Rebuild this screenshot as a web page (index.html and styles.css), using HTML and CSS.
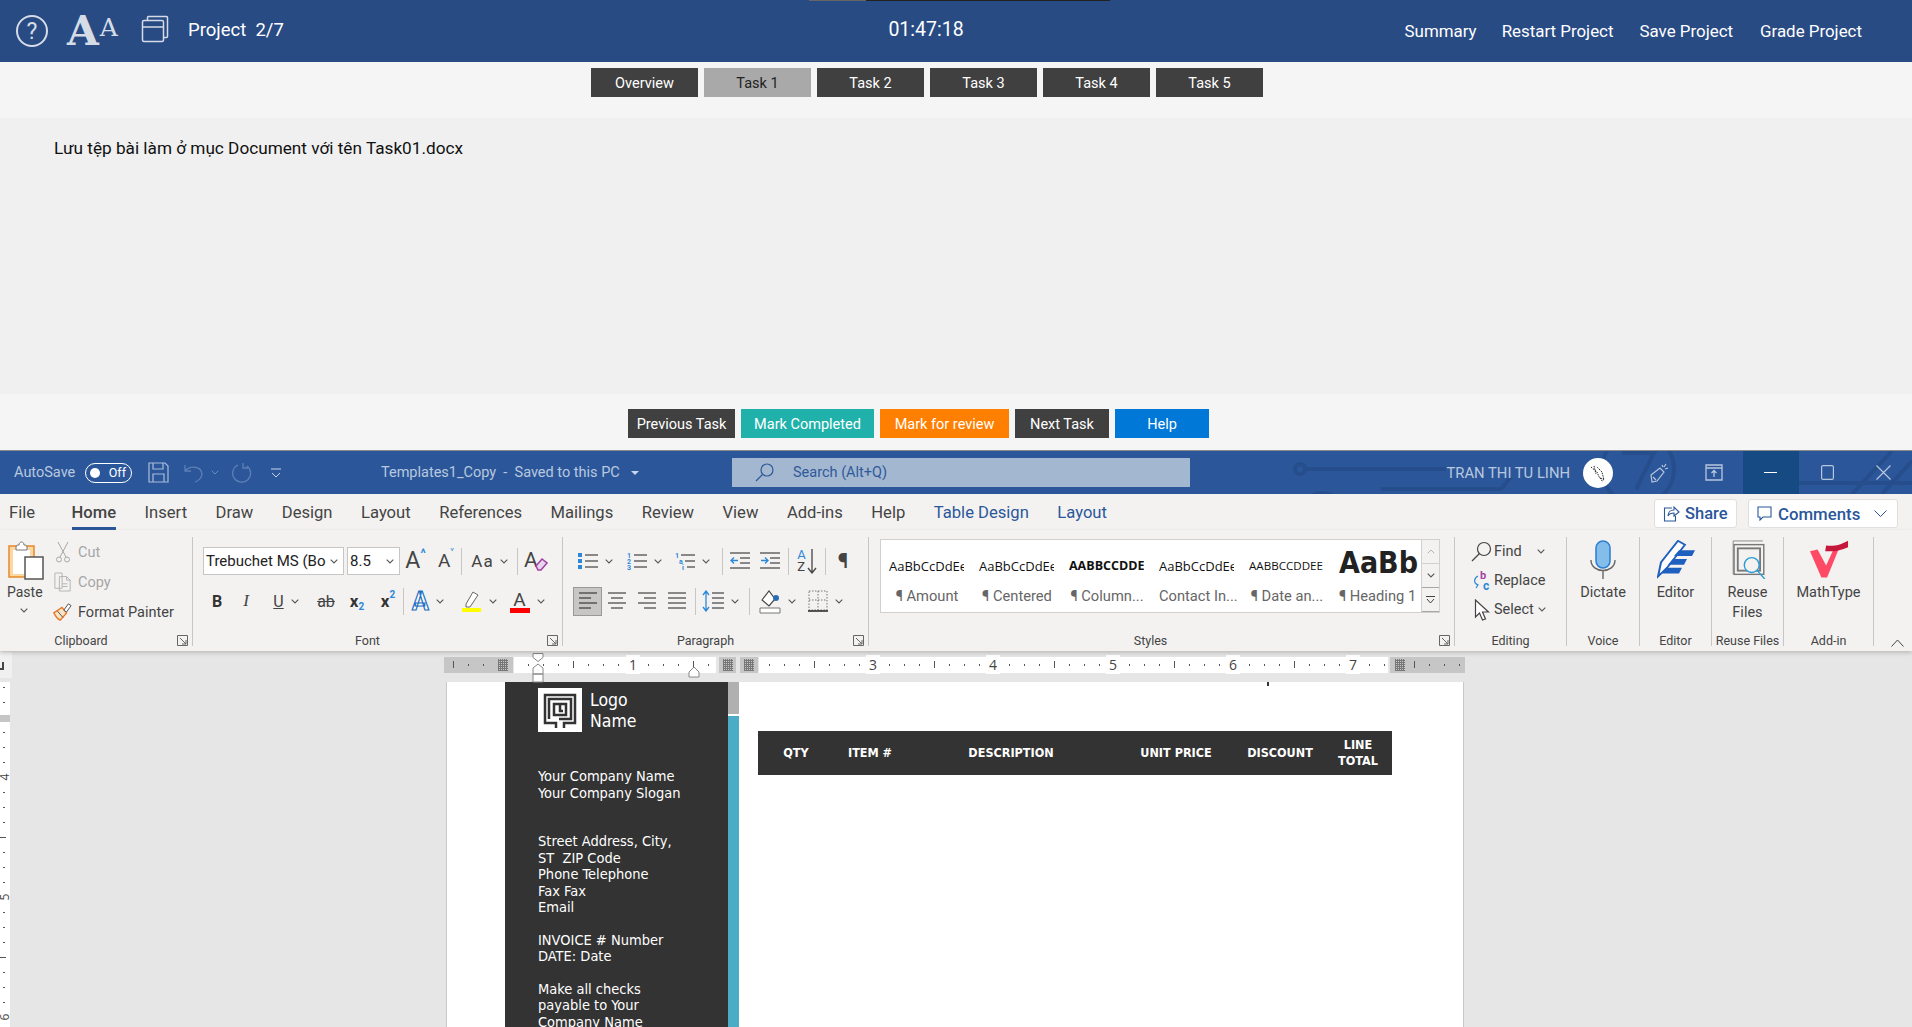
FILE: index.html
```html
<!DOCTYPE html>
<html lang="en">
  <head>
    <meta charset="UTF-8" />
    <meta name="viewport" content="width=device-width, initial-scale=1.0" />
    <title>Project 2/7</title>
    <link rel="stylesheet" href="styles.css">
  </head>
  <body>
    <svg class="sprite" width="0" height="0">
      <symbol id="chev" viewBox="0 0 8 5"><path d="M.7.7 4 4 7.3.7" fill="none" stroke="#555" stroke-width="1.1" /></symbol>
      <symbol id="launch" viewBox="0 0 11 11"><path d="M.5 10.500V.5h10v10zM3 3l6 6M5 9h4V5" fill="none" stroke="#666" /></symbol>
    </svg>

    <div class="progress"><span class="progress-done"></span><span class="progress-rest"></span></div>

    <header class="topbar">
      <div class="topbar-left">
        <svg class="icon-help" width="34" height="34" viewBox="0 0 34 34"><circle cx="17" cy="17" r="15" fill="none" stroke="#d5dce6" stroke-width="2" /><text x="17" y="25" text-anchor="middle" class="help-mark">?</text></svg>
        <span class="aa"><span class="aa-big">A</span><span class="aa-small">A</span></span>
        <svg class="icon-window" width="28" height="28" viewBox="0 0 28 28"><path d="M6.500 5.500V2.500a1 1 0 0 1 1-1h18a1 1 0 0 1 1 1v19a1 1 0 0 1-1 1h-3" fill="none" stroke="#d5dce6" stroke-width="1.500" /><rect x="1.500" y="5.500" width="21" height="21" rx="1.500" fill="none" stroke="#d5dce6" stroke-width="1.500" /><path d="M1.500 12h21" stroke="#d5dce6" stroke-width="1.500" /></svg>
        <span class="project">Project&nbsp; 2/7</span>
      </div>
      <div class="timer">01:47:18</div>
      <nav class="topbar-links">
        <a class="link-summary">Summary</a>
        <a class="link-restart">Restart Project</a>
        <a class="link-save">Save Project</a>
        <a class="link-grade">Grade Project</a>
      </nav>
    </header>

    <div class="task-tabs">
      <button class="btn">Overview</button>
      <button class="btn btn-active">Task 1</button>
      <button class="btn">Task 2</button>
      <button class="btn">Task 3</button>
      <button class="btn">Task 4</button>
      <button class="btn">Task 5</button>
    </div>

    <main class="instructions">Lưu tệp bài làm ở mục Document với tên Task01.docx</main>

    <div class="actions">
      <button class="btn btn-prev">Previous Task</button>
      <button class="btn btn-teal">Mark Completed</button>
      <button class="btn btn-orange">Mark for review</button>
      <button class="btn btn-next">Next Task</button>
      <button class="btn btn-help">Help</button>
    </div>

    <section class="word">
      <div class="titlebar">
        <svg class="circuit" width="640" height="43" viewBox="0 0 640 43">
          <g fill="none" stroke="#264e8d" stroke-width="4">
            <circle cx="28" cy="18" r="5" />
            <path d="M33 18H174" />
            <circle cx="50" cy="64" r="22" />
            <circle cx="366" cy="18" r="36" />
            <path d="M350 2h32l-18 36" />
            <path d="M109 38h120l10-12" />
            <path d="M525 32h115M580 43l40-43M610 43l30-33" />
          </g>
        </svg>
        <div class="qat">
          <span class="autosave">AutoSave</span>
          <span class="toggle"><span class="toggle-dot"></span>Off</span>
          <svg class="qat-save" width="21" height="21" viewBox="0 0 21 21" fill="none" stroke="#a9bcd8" stroke-width="1.200"><path d="M1 1h16l3 3v16H1z" /><path d="M5 1v6h10V1M5 20v-8h11v8" /></svg>
          <svg class="qat-undo" width="20" height="21" viewBox="0 0 20 21" fill="none" stroke="#5d7fb5" stroke-width="1.300"><path d="M1 3v6h6M1 9c4-5 16-6 17 3 0 4-4 7-7 8" /></svg>
          <svg class="qat-chev" width="8" height="5" viewBox="0 0 8 5" fill="none" stroke="#6f8dbd"><path d="M.7.7 4 4 7.3.7" /></svg>
          <svg class="qat-redo" width="21" height="21" viewBox="0 0 21 21" fill="none" stroke="#5d7fb5" stroke-width="1.300"><path d="M12 1v5h5M7 3a9 9 0 1 0 9 1" /></svg>
          <svg class="qat-more" width="12" height="12" viewBox="0 0 12 12" fill="none" stroke="#c7d3e6"><path d="M1 2h10M2 6l4 4 4-4" /></svg>
        </div>
        <div class="doc-title">Templates1_Copy &nbsp;-&nbsp; Saved to this PC <span class="caret"></span></div>
        <div class="search">
          <svg width="19" height="19" viewBox="0 0 19 19" fill="none" stroke="#2f5a99" stroke-width="1.200"><circle cx="12" cy="7" r="6" /><path d="M7.500 11.500 1 18" /></svg>
          <span>Search (Alt+Q)</span>
        </div>
        <div class="win">
          <span class="user">TRAN THI TU LINH</span>
          <svg class="avatar" width="30" height="30" viewBox="0 0 30 30"><circle cx="15" cy="15" r="15" fill="#fff" /><path d="M8 9l6 5 2 5 5 3-2-8-5-5M11 8l2 8M17 20l3 4" fill="none" stroke="#222" stroke-dasharray="1.500 1" /></svg>
          <svg class="feather" width="22" height="22" viewBox="0 0 22 22" fill="none" stroke="#b7c6de" stroke-width="1.200"><path d="M3 13 12 6l4 4-7 9-5 1zM5 15l3 3M14 3l1 2M18 2l-2 3M20 6l-3 1" /></svg>
          <span class="winbtn"><svg width="18" height="18" viewBox="0 0 18 18" fill="none" stroke="#b7c6de" stroke-width="1.300"><path d="M1 1h16v15H1zM1 4h16M9 13V7M6.500 9 9 6.500 11.500 9" /></svg></span>
          <span class="winbtn winbtn-min"><span class="min-line"></span></span>
          <span class="winbtn"><svg width="13" height="15" viewBox="0 0 13 15" fill="none" stroke="#b7c6de" stroke-width="1.200"><rect x=".6" y=".6" width="11.800" height="13.800" rx="1.500" /></svg></span>
          <span class="winbtn"><svg width="15" height="15" viewBox="0 0 15 15" stroke="#b7c6de" stroke-width="1.200"><path d="M.5.5l14 14M14.500.5l-14 14" /></svg></span>
        </div>
      </div>

      <div class="ribbon-tabs">
        <a>File</a>
        <a class="tab-current">Home</a>
        <a>Insert</a>
        <a>Draw</a>
        <a>Design</a>
        <a>Layout</a>
        <a>References</a>
        <a>Mailings</a>
        <a>Review</a>
        <a>View</a>
        <a>Add-ins</a>
        <a>Help</a>
        <a class="tab-context">Table Design</a>
        <a class="tab-context">Layout</a>
        <div class="ribbon-share">
          <button class="share"><svg width="17" height="17" viewBox="0 0 17 17" fill="none" stroke="#2b579a" stroke-width="1.100"><path d="M9 3H1.500v13h11v-5M5 11c0-4 3-6 6-6V2l5 5-5 4V8c-3 0-5 1-6 3z" /></svg>Share</button>
          <button class="share comments"><svg width="15" height="15" viewBox="0 0 15 15" fill="none" stroke="#2b579a" stroke-width="1.100"><path d="M1 1h13v10H6l-3 3v-3H1z" /></svg>Comments<svg class="comments-chev" width="13" height="7" viewBox="0 0 13 7" fill="none" stroke="#2b579a"><path d="M.5.5l6 6 6-6" /></svg></button>
        </div>
      </div>

      <div class="ribbon">
        <div class="group group-clipboard launch">
          <div class="group-body clip">
            <div class="paste">
              <svg width="36" height="40" viewBox="0 0 36 40"><rect x="1" y="6" width="25" height="31" fill="#fcd9a4" stroke="#e8892b" stroke-width="1.500" /><rect x="5" y="10" width="17" height="24" fill="#fff" /><path d="M8 7c0-2 2-2 3-2 0-4 5-4 5 0 1 0 3 0 3 2v3H8z" fill="#fff" stroke="#777" /><rect x="17" y="17" width="18" height="22" fill="#fff" stroke="#555" stroke-width="1.500" /></svg>
              <span class="paste-label">Paste</span>
              <svg class="paste-chev" width="8" height="5"><use href="#chev" /></svg>
            </div>
            <div class="clip-list">
              <div class="clip-row is-off"><svg width="16" height="22" viewBox="0 0 16 22" fill="none" stroke="#a8a8a8"><path d="M3 1l8 15M13 1 5 16" /><circle cx="4" cy="18.500" r="2.500" /><circle cx="12" cy="18.500" r="2.500" /></svg><span>Cut</span></div>
              <div class="clip-row is-off"><svg width="20" height="22" viewBox="0 0 20 22" fill="none" stroke="#b0b0b0"><path d="M1 1h8v17H1zM6 5h8l4 4v12H6zM14 5v4h4M9 13h6M9 16h6" fill="#f3f2f1" /></svg><span>Copy</span></div>
              <div class="clip-row painter"><svg width="22" height="22" viewBox="0 0 22 22"><path d="M2 12 11 6l5 6-7 8c-3-1-5-4-7-8z" fill="#fbe4c6" stroke="#e8792b" stroke-width="1.500" /><path d="M6 10l6 7M13 9l5-7 3 2-5 7z" fill="#fff" stroke="#444" /></svg><span>Format Painter</span></div>
            </div>
          </div>
          <div class="group-label">Clipboard</div>
          <svg class="launcher" width="11" height="11"><use href="#launch" /></svg>
        </div>

        <div class="group group-font launch">
          <div class="group-body tool-rows">
            <div class="tool-row">
              <span class="field field-name"><span class="field-text">Trebuchet MS (Body)</span><svg width="8" height="5"><use href="#chev" /></svg></span>
              <span class="field field-size"><span class="field-text">8.5</span><svg width="8" height="5"><use href="#chev" /></svg></span>
              <span class="tool w31 glyph-a">A<small class="up">^</small></span>
              <span class="tool w30 glyph-a small-a">A<small class="down">˅</small></span>
              <span class="vsep"></span>
              <span class="tool w55 aa-case">Aa<svg width="8" height="5"><use href="#chev" /></svg></span>
              <span class="vsep"></span>
              <span class="tool w35"><svg width="24" height="24" viewBox="0 0 24 24"><text x="0" y="18" class="clear-a">A</text><path d="M12 17l6-7 5 4-6 7h-3z" fill="#e8d5ee" stroke="#a33fa3" stroke-width="1.500" /></svg></span>
            </div>
            <div class="tool-row row-two">
              <span class="tool w28 glyph-b">B</span>
              <span class="tool w30 glyph-i">I</span>
              <span class="tool w50 glyph-u"><u>U</u><svg width="8" height="5"><use href="#chev" /></svg></span>
              <span class="tool w30 glyph-ab">ab</span>
              <span class="tool w32 glyph-x">x<sub>2</sub></span>
              <span class="tool w30 glyph-x">x<sup>2</sup></span>
              <span class="vsep"></span>
              <span class="tool w48 glyph-effect">A<svg width="8" height="5"><use href="#chev" /></svg></span>
              <span class="tool w52"><svg width="22" height="24" viewBox="0 0 22 24"><path d="M6 15 13 3l5 3-8 12H6z" fill="#fff" stroke="#666" /><path d="M2 19h19v4H2z" fill="#ffff00" /></svg><svg width="8" height="5"><use href="#chev" /></svg></span>
              <span class="tool w46 glyph-red"><span class="red-a">A</span><svg width="8" height="5"><use href="#chev" /></svg></span>
            </div>
          </div>
          <div class="group-label">Font</div>
          <svg class="launcher" width="11" height="11"><use href="#launch" /></svg>
        </div>

        <div class="group group-para launch">
          <div class="group-body tool-rows">
            <div class="tool-row">
              <span class="tool w44"><svg width="20" height="18" viewBox="0 0 20 18"><path d="M0 1h4v4H0zM0 7h4v4H0zM0 13h4v4H0z" fill="#2b88d8" /><path d="M7 3h13M7 9h13M7 15h13" stroke="#666" stroke-width="1.500" /></svg><svg width="8" height="5"><use href="#chev" /></svg></span>
              <span class="tool w55"><svg width="20" height="18" viewBox="0 0 20 18"><text x="0" y="6" class="list-num">1</text><text x="0" y="12" class="list-num">2</text><text x="0" y="18" class="list-num">3</text><path d="M7 3h13M7 9h13M7 15h13" stroke="#666" stroke-width="1.500" /></svg><svg width="8" height="5"><use href="#chev" /></svg></span>
              <span class="tool w40"><svg width="20" height="18" viewBox="0 0 20 18"><text x="0" y="6" class="list-num">1</text><text x="4" y="12" class="list-num">a</text><text x="7" y="18" class="list-num">i</text><path d="M6 3h14M10 9h10M12 15h8" stroke="#666" stroke-width="1.500" /></svg><svg width="8" height="5"><use href="#chev" /></svg></span>
              <span class="vsep sep-gap"></span>
              <span class="tool w34"><svg width="20" height="18" viewBox="0 0 20 18"><path d="M0 1h20M10 6h10M10 11h10M0 16h20" stroke="#666" stroke-width="1.500" /><path d="M8 8.500H1M4 5.500l-3 3 3 3" fill="none" stroke="#2b88d8" stroke-width="1.300" /></svg></span>
              <span class="tool w26"><svg width="20" height="18" viewBox="0 0 20 18"><path d="M0 1h20M10 6h10M10 11h10M0 16h20" stroke="#666" stroke-width="1.500" /><path d="M1 8.500h7M5 5.500l3 3-3 3" fill="none" stroke="#2b88d8" stroke-width="1.300" /></svg></span>
              <span class="vsep sep-gap-small"></span>
              <span class="tool w36 sort"><span class="sort-az"><b>A</b><i>Z</i></span><svg width="10" height="26" viewBox="0 0 10 26" fill="none" stroke="#444" stroke-width="1.300"><path d="M5 1v24M1 20l4 5 4-5" /></svg></span>
              <span class="vsep"></span>
              <span class="tool w34 pilcrow">¶</span>
            </div>
            <div class="tool-row row-two">
              <span class="tool align-on"><svg width="20" height="20" viewBox="0 0 20 20"><path d="M1 2h18M1 7h12M1 12h18M1 17h12" stroke="#555" stroke-width="1.500" /></svg></span>
              <span class="tool w30"><svg width="20" height="20" viewBox="0 0 20 20"><path d="M1 2h18M4 7h12M1 12h18M4 17h12" stroke="#666" stroke-width="1.500" /></svg></span>
              <span class="tool w30"><svg width="20" height="20" viewBox="0 0 20 20"><path d="M1 2h18M7 7h12M1 12h18M7 17h12" stroke="#666" stroke-width="1.500" /></svg></span>
              <span class="tool w30"><svg width="20" height="20" viewBox="0 0 20 20"><path d="M1 2h18M1 7h18M1 12h18M1 17h18" stroke="#666" stroke-width="1.500" /></svg></span>
              <span class="vsep sep-gap-tiny"></span>
              <span class="tool w48"><svg width="22" height="22" viewBox="0 0 22 22"><path d="M4 1v20M1 5l3-4 3 4M1 17l3 4 3-4" fill="none" stroke="#2b88d8" stroke-width="1.300" /><path d="M10 3h12M10 8h12M10 13h12M10 18h12" stroke="#666" stroke-width="1.500" /></svg><svg width="8" height="5"><use href="#chev" /></svg></span>
              <span class="vsep sep-gap-small"></span>
              <span class="tool w54"><svg width="22" height="26" viewBox="0 0 22 26"><path d="M3 12l7-9 6 8-6 7z" fill="#fff" stroke="#444" stroke-width="1.200" /><circle cx="17" cy="10" r="3" fill="#2b6cb8" /><path d="M1 20h20v5H1z" fill="#fff" stroke="#777" /></svg><svg width="8" height="5"><use href="#chev" /></svg></span>
              <span class="tool w42"><svg width="20" height="22" viewBox="0 0 20 22" fill="none" stroke="#777" stroke-dasharray="1.500 1.500"><path d="M1 1h18v19H1zM10 1v19M1 10h18" /><path d="M0 21h20" stroke="#222" stroke-width="1.500" stroke-dasharray="none" /></svg><svg width="8" height="5"><use href="#chev" /></svg></span>
            </div>
          </div>
          <div class="group-label">Paragraph</div>
          <svg class="launcher" width="11" height="11"><use href="#launch" /></svg>
        </div>

        <div class="group group-styles launch">
          <div class="group-body">
            <div class="gallery">
              <div class="style-item"><div class="style-preview">AaBbCcDdEe</div><div class="style-name">¶ Amount</div></div>
              <div class="style-item"><div class="style-preview">AaBbCcDdEe</div><div class="style-name">¶ Centered</div></div>
              <div class="style-item"><div class="style-preview style-bold">AABBCCDDEE</div><div class="style-name">¶ Column...</div></div>
              <div class="style-item"><div class="style-preview">AaBbCcDdEe</div><div class="style-name">Contact In...</div></div>
              <div class="style-item"><div class="style-preview style-caps">AABBCCDDEE</div><div class="style-name">¶ Date an...</div></div>
              <div class="style-item"><div class="style-preview style-big">AaBb</div><div class="style-name">¶ Heading 1</div></div>
              <div class="gallery-scroll">
                <span class="scroll-up"><svg width="8" height="5" viewBox="0 0 8 5" fill="none" stroke="#b5b3b1"><path d="M.7 4.300 4 1l3.300 3.300" /></svg></span>
                <span class="scroll-down"><svg width="8" height="5"><use href="#chev" /></svg></span>
                <span class="scroll-more"><svg width="9" height="8" viewBox="0 0 9 8" fill="none" stroke="#444"><path d="M0 .5h9M1 3l3.500 4L8 3" /></svg></span>
              </div>
            </div>
          </div>
          <div class="group-label">Styles</div>
          <svg class="launcher" width="11" height="11"><use href="#launch" /></svg>
        </div>

        <div class="group group-editing">
          <div class="group-body edit-list">
            <div class="edit-row"><svg width="21" height="21" viewBox="0 0 21 21" fill="none" stroke="#444" stroke-width="1.200"><circle cx="13" cy="8" r="6.500" /><path d="M8.500 12.500 1 20" /></svg><span>Find</span><svg class="find-chev" width="8" height="5"><use href="#chev" /></svg></div>
            <div class="edit-row"><svg width="19" height="21" viewBox="0 0 19 21"><text x="8" y="9" class="rep-b">b</text><text x="11" y="20" class="rep-c">c</text><path d="M6 6C2 8 1 13 6 15M3 13l3 2-2 3" fill="none" stroke="#2b88d8" stroke-width="1.200" /></svg><span>Replace</span></div>
            <div class="edit-row"><svg width="16" height="22" viewBox="0 0 16 22" fill="#fff" stroke="#444" stroke-width="1.200"><path d="M2 1v17l4-4 3 7 3-1-3-7h6z" /></svg><span>Select</span><svg class="select-chev" width="8" height="5"><use href="#chev" /></svg></div>
          </div>
          <div class="group-label">Editing</div>
        </div>

        <div class="group group-voice">
          <div class="group-body big-tool">
            <svg width="26" height="39" viewBox="0 0 26 39" fill="none"><rect x="6" y="1" width="14" height="27" rx="7" fill="#83bde9" stroke="#2b7cd3" stroke-width="1.500" /><path d="M1 20c0 14 24 14 24 0M13 31v8" stroke="#666" stroke-width="1.400" /></svg>
            <span class="big-name">Dictate</span>
          </div>
          <div class="group-label">Voice</div>
        </div>

        <div class="group group-editor">
          <div class="group-body big-tool">
            <svg width="38" height="39" viewBox="0 0 38 49" preserveAspectRatio="none"><path d="M1 46 4 28 21 1l7 5-18 29z" fill="#fff" stroke="#1f5fbf" stroke-width="2" /><path d="M22 13h16l-3 7H17zM16 24h14l-3 7H11zM9 35h16l-3 7H5z" fill="#1f5fbf" /></svg>
            <span class="big-name">Editor</span>
          </div>
          <div class="group-label">Editor</div>
        </div>

        <div class="group group-reuse">
          <div class="group-body big-tool">
            <svg width="38" height="39" viewBox="0 0 38 42" fill="none"><path d="M3 1h32M3 1v36" stroke="#888" /><rect x="4" y="5" width="32" height="32" stroke="#777" stroke-width="1.500" fill="#f3f2f1" /><rect x="8" y="9" width="24" height="24" stroke="#777" stroke-width="2" /><circle cx="23" cy="27" r="8" fill="#f3f2f1" stroke="#2b9bd8" stroke-width="1.500" /><path d="M29 33l8 9" stroke="#2b9bd8" stroke-width="1.500" /></svg>
            <span class="big-name">Reuse<br />Files</span>
          </div>
          <div class="group-label">Reuse Files</div>
        </div>

        <div class="group group-addin">
          <div class="group-body big-tool">
            <svg width="40" height="39" viewBox="0 0 42 49" preserveAspectRatio="none"><path d="M1 14l8-2 9 20L26 11l6-2-13 38h-6z" fill="#ff4a66" /><path d="M18 7c8 1 14 0 23-6l0 8c-8 4-14 6-24 5z" fill="#c4173a" /></svg>
            <span class="big-name">MathType</span>
          </div>
          <div class="group-label">Add-in</div>
        </div>

        <svg class="collapse" width="13" height="8" viewBox="0 0 13 8" fill="none" stroke="#444"><path d="M.5 7.500l6-6.500 6 6.500" /></svg>
      </div>

      <div class="workspace">
        <div class="ruler-row">
          <span class="ruler-corner"><span class="ruler-l"></span></span>
          <div class="ruler">
            <span class="ruler-seg seg-gray seg-left"><span class="hatch"></span></span>
            <span class="ruler-seg seg-white seg-a"></span>
            <span class="ruler-seg seg-box"><span class="hatch"></span></span>
            <span class="ruler-seg seg-box seg-box2"><span class="hatch"></span></span>
            <span class="ruler-seg seg-white seg-b"></span>
            <span class="ruler-seg seg-gray seg-right"><span class="hatch"></span></span>
            <div class="ruler-nums">
              <span></span><span><b>1</b></span><span></span><span><b>3</b></span><span><b>4</b></span><span><b>5</b></span><span><b>6</b></span><span><b>7</b></span>
            </div>
            <svg class="indent" width="14" height="30" viewBox="0 0 14 30" fill="#fff" stroke="#888"><path d="M2 .5h10v4l-5 4-5-4zM2 21v-6l5-4 5 4v6zM2 21h10v8H2z" /></svg>
            <svg class="indent-right" width="14" height="12" viewBox="0 0 14 12" fill="#fff" stroke="#888"><path d="M2 11V6l5-5 5 5v5z" /></svg>
          </div>
        </div>
        <div class="doc-area">
          <div class="vruler">
            <span class="vruler-mark"></span>
            <span class="vnum vnum4">4</span>
            <span class="vnum vnum5">5</span>
            <span class="vnum vnum6">6</span>
          </div>
          <div class="page">
            <aside class="sidebar">
              <div class="logo-row">
                <svg class="logo" width="44" height="44" viewBox="0 0 44 44"><rect width="44" height="44" fill="#fff" /><g fill="none" stroke="#333" stroke-width="2.500"><path d="M18 40v-5H7V7h30v28H26v5" /><path d="M11 31V11h22v20H21" /><path d="M16 16h12v11H16z" /><path d="M22 16v7h3" /></g></svg>
                <div class="logo-name">Logo<br />Name</div>
              </div>
              <p class="side-a">Your Company Name<br />Your Company Slogan</p>
              <p class="side-b">Street Address, City,<br />ST&nbsp; ZIP Code<br />Phone Telephone<br />Fax Fax<br />Email</p>
              <p class="side-c">INVOICE # Number<br />DATE: Date</p>
              <p class="side-c">Make all checks<br />payable to Your<br />Company Name</p>
            </aside>
            <div class="strip"><span class="strip-top"></span><span class="strip-rest"></span></div>
            <div class="page-body">
              <span class="cursor"></span>
              <div class="invoice-head">
                <span>QTY</span>
                <span>ITEM #</span>
                <span>DESCRIPTION</span>
                <span>UNIT PRICE</span>
                <span>DISCOUNT</span>
                <span>LINE<br />TOTAL</span>
              </div>
            </div>
          </div>
        </div>
      </div>
    </section>
  </body>
</html>
```

FILE: styles.css
```css
* {
  box-sizing: border-box;
}

html,
body {
  margin: 0;
  padding: 0;
  height: 1027px;
  overflow: hidden;
}

body {
  font-family: Roboto, "Noto Sans", sans-serif;
  background: #f5f5f5;
  color: #222;
  display: flex;
  flex-direction: column;
  position: relative;
}

.sprite {
  position: absolute;
}

svg {
  display: block;
  flex: none;
}

/* assessment header */
.progress {
  position: absolute;
  top: 0;
  left: 809px;
  display: flex;
  height: 1px;
}

.progress-done {
  width: 57px;
  background: #666;
}

.progress-rest {
  width: 244px;
  background: #222;
}

.topbar {
  height: 62px;
  flex: none;
  background: #294b84;
  color: #fff;
  display: grid;
  grid-template-columns: 1fr auto 1fr;
  align-items: center;
  font-size: 16.9px;
}

.topbar-left {
  display: flex;
  align-items: center;
  padding-left: 15px;
}

.help-mark {
  font: 23px Roboto, sans-serif;
  fill: #d5dce6;
}

.aa {
  margin-left: 18px;
  font-family: "DejaVu Serif", serif;
  color: #d5dce6;
  display: flex;
  align-items: flex-start;
  width: 51px;
  height: 40px;
}

.aa-big {
  font-size: 41px;
  font-weight: 700;
  line-height: 40px;
}

.aa-small {
  font-size: 25px;
  line-height: 30px;
  margin-top: 2px;
  margin-left: 1px;
}

.icon-window {
  margin-left: 23px;
  margin-top: -4px;
}

.project {
  margin-left: 19px;
  margin-top: -3px;
  font-size: 18.5px;
}

.timer {
  font-size: 19.5px;
  margin-top: -3px;
  padding-right: 60px;
}

.topbar-links {
  display: flex;
  justify-content: flex-end;
  padding-right: 50px;
}

.link-restart {
  margin-left: 25px;
}

.link-save {
  margin-left: 26px;
}

.link-grade {
  margin-left: 27px;
}

/* task buttons */
.btn {
  height: 29px;
  border: none;
  background: #404040;
  color: #fff;
  font: 14.5px Roboto, sans-serif;
  padding: 2px 0 0;
}

.task-tabs {
  height: 56px;
  flex: none;
  display: flex;
  gap: 6px;
  padding: 6px 0 0 591px;
}

.task-tabs .btn {
  width: 107px;
}

.task-tabs .btn-active {
  background: #a9a9a9;
  color: #222;
}

.instructions {
  height: 276px;
  flex: none;
  background: #f0f0f0;
  padding: 20px 54px;
  font-size: 17.2px;
  line-height: 20px;
  color: #111;
}

.actions {
  height: 56px;
  flex: none;
  display: flex;
  gap: 6px;
  padding: 15px 0 0 628px;
}

.btn-prev {
  width: 107px;
}

.btn-teal {
  width: 133px;
  background: #20b2aa;
}

.btn-orange {
  width: 129px;
  background: #ff8000;
}

.btn-next {
  width: 94px;
}

.btn-help {
  width: 94px;
  background: #0078d7;
}

/* word window */
.word {
  flex: 1;
  display: flex;
  flex-direction: column;
  min-height: 0;
}

.titlebar {
  height: 44px;
  flex: none;
  background: #2b579a;
  border-top: 1px solid #8a8a8a;
  display: flex;
  align-items: center;
  color: #b9c8df;
  font-size: 14.5px;
  position: relative;
}

.circuit {
  position: absolute;
  right: 0;
  top: 0;
}

.qat {
  width: 381px;
  flex: none;
  display: flex;
  align-items: center;
  padding-left: 14px;
}

.autosave {
  width: 71px;
}

.toggle {
  width: 47px;
  height: 20px;
  border: 1.5px solid #fff;
  border-radius: 10px;
  color: #fff;
  font-size: 12.5px;
  display: flex;
  align-items: center;
  justify-content: space-between;
  padding: 0 5px 0 4px;
}

.toggle-dot {
  width: 10px;
  height: 10px;
  border-radius: 50%;
  background: #fff;
}

.qat-save {
  margin-left: 16px;
}

.qat-undo {
  margin-left: 15px;
}

.qat-chev {
  margin-left: 7px;
}

.qat-redo {
  margin-left: 12px;
}

.qat-more {
  margin-left: 18px;
}

.doc-title {
  width: 351px;
  flex: none;
  display: flex;
  align-items: center;
  white-space: pre;
}

.caret {
  width: 0;
  height: 0;
  margin-left: 8px;
  border: 4px solid transparent;
  border-top-color: #c9d5e8;
  border-bottom: none;
}

.search {
  width: 458px;
  height: 29px;
  flex: none;
  background: #a3b7d1;
  color: #2f5a99;
  display: flex;
  align-items: center;
  gap: 19px;
  padding-left: 23px;
  position: relative;
}

.win {
  flex: 1;
  height: 43px;
  display: flex;
  align-items: center;
  justify-content: flex-end;
  position: relative;
}

.user {
  font-size: 14.8px;
}

.avatar {
  margin-left: 13px;
}

.feather {
  margin-left: 35px;
  margin-right: 16px;
}

.winbtn {
  width: 56.5px;
  height: 43px;
  display: flex;
  align-items: center;
  justify-content: center;
}

.winbtn-min {
  background: #164a83;
}

.min-line {
  width: 13px;
  height: 1.5px;
  background: #fff;
}

.ribbon-tabs {
  height: 36px;
  flex: none;
  background: #f3f2f1;
  display: flex;
  align-items: center;
  gap: 28.5px;
  padding-left: 9px;
  font-size: 16.6px;
  color: #444;
}

.ribbon-tabs a {
  position: relative;
  height: 36px;
  line-height: 38px;
}

.tab-current {
  font-weight: 500;
  margin-left: 8px;
}

.tab-current::after {
  content: "";
  position: absolute;
  left: 0;
  right: 0;
  bottom: 0;
  height: 3px;
  background: #2b579a;
}

.tab-context {
  color: #2b579a;
}

.ribbon-share {
  margin-left: auto;
  display: flex;
  gap: 11px;
  padding-right: 14px;
  margin-top: 3px;
}

.share {
  height: 29px;
  width: 83px;
  background: #fff;
  border: 1px solid #e1dfdd;
  border-radius: 3px;
  color: #2b579a;
  font: 500 16.5px Roboto, sans-serif;
  display: flex;
  align-items: center;
  gap: 5px;
  padding: 0 0 0 8px;
}

.comments {
  width: 150px;
  gap: 6px;
  font-size: 16.8px;
}

.comments-chev {
  margin-left: 8px;
}

/* ribbon groups */
.ribbon {
  height: 121px;
  flex: none;
  background: #f3f2f1;
  display: flex;
  padding: 7px 0 5px;
  position: relative;
  z-index: 2;
  box-shadow: 0 2px 4px rgba(0, 0, 0, 0.18);
  font-size: 14.5px;
  color: #444;
}

.group {
  flex: none;
  display: flex;
  flex-direction: column;
  border-right: 1px solid #c8c6c4;
  position: relative;
}

.group-body {
  flex: 1;
  min-height: 0;
}

.group-label {
  font-size: 12.5px;
  line-height: 16px;
  text-align: center;
  white-space: nowrap;
  margin-bottom: -3px;
}

.launch .group-label {
  padding-right: 20px;
}

.group-clipboard .group-label {
  padding-right: 30px;
}

.group-styles .group-label {
  padding-right: 33px;
}

.launcher {
  position: absolute;
  right: 4px;
  bottom: 0;
}

.group-clipboard {
  width: 193px;
}

.group-font {
  width: 370px;
}

.group-para {
  width: 306px;
}

.group-styles {
  width: 586px;
  padding-left: 11px;
}

.group-editing {
  width: 112px;
}

.group-voice {
  width: 73px;
}

.group-editor {
  width: 72px;
}

.group-reuse {
  width: 72px;
}

.group-addin {
  width: 90px;
}

.clip {
  display: flex;
  padding-left: 8px;
}

.paste {
  width: 44px;
  display: flex;
  flex-direction: column;
  align-items: flex-start;
  padding-top: 3px;
}

.paste-label {
  margin-top: 4px;
  margin-left: -1px;
  font-size: 14px;
}

.paste-chev {
  margin: 8px 0 0 12px;
}

.clip-row {
  height: 30px;
  display: flex;
  align-items: center;
  gap: 6px;
  white-space: nowrap;
}

.clip-row svg {
  margin-left: 2px;
  width: 18px;
}

.clip-row.is-off {
  color: #a6a6a6;
}

.painter svg {
  width: 20px;
  margin-left: 0;
}

/* icon rows */
.tool-rows {
  padding: 10px 0 0 10px;
}

.tool-row {
  display: flex;
  align-items: center;
  height: 28px;
}

.row-two {
  margin-top: 12px;
}

.tool {
  flex: none;
  display: flex;
  align-items: center;
  justify-content: center;
  gap: 7px;
  height: 28px;
}

.w26 { width: 26px; }
.w28 { width: 28px; }
.w30 { width: 30px; }
.w31 { width: 31px; }
.w32 { width: 32px; }
.w34 { width: 34px; }
.w35 { width: 35px; }
.w36 { width: 36px; }
.w40 { width: 40px; }
.w42 { width: 42px; }
.w44 { width: 44px; }
.w46 { width: 46px; }
.w48 { width: 48px; }
.w50 { width: 50px; }
.w52 { width: 52px; }
.w54 { width: 54px; }
.w55 { width: 55px; }

.vsep {
  width: 1px;
  height: 27px;
  flex: none;
  background: #c8c6c4;
}

.sep-gap {
  margin-left: 10px;
}

.sep-gap-small {
  margin-left: 5px;
}

.sep-gap-tiny {
  margin-left: 3px;
}

.field {
  height: 28px;
  background: #fff;
  border: 1px solid #c8c6c4;
  display: flex;
  align-items: center;
  color: #222;
  font-size: 15px;
  padding: 0 5px 0 2px;
  flex: none;
}

.field-text {
  overflow: hidden;
  white-space: nowrap;
}

.field-name {
  width: 141px;
  margin-right: 3px;
}

.field-name .field-text {
  width: 121px;
  margin-right: 4px;
}

.field-size {
  width: 53px;
}

.field-size .field-text {
  width: 38px;
}

.glyph-a {
  font-size: 23px;
  gap: 0;
  align-items: flex-start;
  line-height: 28px;
}

.small-a {
  font-size: 19px;
}

.glyph-a small {
  color: #2b88d8;
  font-size: 12px;
  line-height: 14px;
  font-weight: 700;
}

.aa-case {
  font-size: 17px;
  letter-spacing: 1px;
  gap: 6px;
}

.clear-a {
  font: 21px Roboto, sans-serif;
  fill: #444;
}

.glyph-b {
  font-weight: 700;
  font-size: 16px;
  color: #333;
}

.glyph-i {
  font: italic 17px "Liberation Serif", serif;
}

.glyph-u {
  font-size: 16px;
}

.glyph-ab {
  font-size: 16px;
  text-decoration: line-through;
}

.glyph-x {
  font-size: 17px;
  font-weight: 700;
  gap: 0;
  color: #333;
}

.glyph-x sub,
.glyph-x sup {
  font-size: 10px;
  line-height: 10px;
  color: #2b88d8;
}

.glyph-x sub {
  align-self: flex-end;
  margin-bottom: 3px;
}

.glyph-x sup {
  align-self: flex-start;
  margin-top: 3px;
}

.glyph-effect {
  font-size: 25px;
  font-weight: 700;
  color: #fff;
  -webkit-text-stroke: 1.2px #1f6fc0;
}

.red-a {
  display: block;
  font-size: 19px;
  line-height: 19px;
  height: 23px;
  width: 20px;
  text-align: center;
  border-bottom: 5px solid #ff0000;
}

.list-num {
  font: 700 7px Roboto, sans-serif;
  fill: #2b88d8;
}

.sort {
  gap: 1px;
}

.sort-az {
  display: flex;
  flex-direction: column;
  font: 13px/12px Roboto, sans-serif;
}

.sort-az b {
  color: #2b88d8;
  font-weight: 400;
}

.sort-az i {
  font-style: normal;
}

.pilcrow {
  font-size: 21px;
  font-weight: 700;
  color: #444;
}

.align-on {
  width: 29px;
  height: 29px;
  background: #c8c6c4;
  border: 1px solid #999;
}

/* style gallery */
.gallery {
  width: 560px;
  height: 74px;
  margin-top: 2px;
  background: #fff;
  border: 1px solid #d2d0ce;
  display: flex;
}

.style-item {
  width: 90px;
  flex: none;
  padding-left: 8px;
}

.style-preview {
  width: 75px;
  height: 41px;
  line-height: 52px;
  overflow: hidden;
  white-space: nowrap;
  font-family: "Open Sans", sans-serif;
  font-size: 13px;
  color: #111;
}

.style-bold {
  font-weight: 700;
  font-size: 12.5px;
}

.style-caps {
  width: 78px;
  font-size: 11.6px;
}

.style-big {
  font: 700 30px/46px "DejaVu Sans Condensed", "DejaVu Sans", sans-serif;
  width: 80px;
  color: #222;
}

.style-name {
  width: 76px;
  font-size: 14.7px;
  line-height: 30px;
  color: #666;
  white-space: nowrap;
  text-align: center;
}

.gallery-scroll {
  width: 18px;
  margin-left: auto;
  display: flex;
  flex-direction: column;
  border-left: 1px solid #d2d0ce;
}

.gallery-scroll span {
  flex: 1;
  display: flex;
  align-items: center;
  justify-content: center;
  background: #f3f2f1;
  border-bottom: 1px solid #a6a6a6;
}

.gallery-scroll .scroll-up {
  border-bottom-color: #d2d0ce;
}

/* editing list */
.edit-list {
  padding: 0 0 0 16px;
}

.edit-row {
  height: 29px;
  display: flex;
  align-items: center;
  gap: 2px;
  font-size: 14.5px;
}

.edit-row svg:first-child {
  width: 21px;
}

.find-chev {
  margin-left: 13px;
}

.select-chev {
  margin-left: 2px;
}

.rep-b {
  font: 700 11px Roboto, sans-serif;
  fill: #a33fa3;
}

.rep-c {
  font: 700 12px Roboto, sans-serif;
  fill: #2b88d8;
}

/* big ribbon buttons */
.big-tool {
  display: flex;
  flex-direction: column;
  align-items: center;
  padding-top: 3px;
}

.big-name {
  text-align: center;
  line-height: 20px;
  margin-top: 4px;
  white-space: nowrap;
}

.collapse {
  position: absolute;
  left: 1891px;
  bottom: 4px;
}

/* document area */
.workspace {
  flex: 1;
  background: #e6e6e6;
  min-height: 0;
  display: flex;
  flex-direction: column;
}

.ruler-row {
  height: 31px;
  flex: none;
  display: flex;
  padding-top: 6px;
  position: relative;
}

.ruler-corner {
  position: absolute;
  left: 0;
  top: 1px;
  width: 12px;
  height: 26px;
  background: #f0f0f0;
}

.ruler-l {
  position: absolute;
  left: 0;
  top: 10px;
  width: 4px;
  height: 8px;
  border-right: 2px solid #444;
  border-bottom: 2px solid #444;
}

.ruler {
  margin-left: 444px;
  width: 1020px;
  height: 16px;
  display: flex;
  position: relative;
}

.ruler-seg {
  height: 16px;
  flex: none;
  display: flex;
  align-items: center;
  background-repeat: repeat-x;
}

.seg-gray {
  background-color: #c6c6c6;
}

.seg-white {
  background-color: #fff;
}

.seg-left {
  width: 69px;
  justify-content: flex-end;
  padding-right: 5px;
  background-image: linear-gradient(90deg, #555 1px, transparent 1px), linear-gradient(90deg, #555 1px, transparent 1px);
  background-size: 15px 2px, 120px 7px;
  background-position: 9px 7px, 9px 4px;
}

.seg-a {
  width: 202px;
  margin-left: 1px;
  background-image: linear-gradient(90deg, #555 1px, transparent 1px), linear-gradient(90deg, #555 1px, transparent 1px);
  background-size: 15px 2px, 120px 7px;
  background-position: -1px 7px, 59px 4px;
}

.seg-box {
  width: 17px;
  margin-left: 3px;
  background: #c6c6c6;
  justify-content: center;
}

.seg-box2 {
  width: 18px;
  margin-left: 4px;
}

.seg-b {
  width: 629px;
  margin-left: 1px;
  background-image: linear-gradient(90deg, #555 1px, transparent 1px), linear-gradient(90deg, #555 1px, transparent 1px);
  background-size: 15px 2px, 120px 7px;
  background-position: 10px 7px, 55px 4px;
}

.seg-right {
  width: 75px;
  margin-left: 2px;
  padding-left: 5px;
  background-image: linear-gradient(90deg, #555 1px, transparent 1px), linear-gradient(90deg, #555 1px, transparent 1px);
  background-size: 15px 2px, 120px 7px;
  background-position: 9px 7px, 24px 4px;
}

.hatch {
  width: 10px;
  height: 12px;
  background:
    repeating-linear-gradient(90deg, #777 0 1px, transparent 1px 2px),
    repeating-linear-gradient(0deg, #777 0 1px, transparent 1px 2px),
    #c6c6c6;
}

.ruler-nums {
  position: absolute;
  left: 9px;
  top: 0;
  height: 16px;
  display: flex;
  font: 14px/16px "Open Sans", sans-serif;
  color: #444;
}

.ruler-nums span {
  width: 120px;
  text-align: center;
}

.ruler-nums b {
  font-weight: 400;
  background: #fff;
  padding: 0 3px;
}

.indent {
  position: absolute;
  left: 87px;
  top: -4px;
}

.indent-right {
  position: absolute;
  left: 243px;
  top: 9px;
}

.doc-area {
  flex: 1;
  display: flex;
  min-height: 0;
}

.vruler {
  width: 10px;
  flex: none;
  position: relative;
  overflow: hidden;
  background-color: #fff;
  background-image: linear-gradient(#555 1px, transparent 1px), linear-gradient(#555 1px, transparent 1px);
  background-size: 2px 15px, 6px 120px;
  background-position: 3px 5px, 0 35px;
  background-repeat: repeat-y;
}

.vruler-mark {
  position: absolute;
  left: 0;
  top: 33px;
  width: 10px;
  height: 7px;
  background: #c6c6c6;
}

.vnum {
  position: absolute;
  left: 0;
  width: 10px;
  background: #fff;
  text-align: center;
  font: 12px/12px "Open Sans", sans-serif;
  color: #444;
  transform: rotate(-90deg);
}

.vnum4 { top: 89px; }
.vnum5 { top: 209px; }
.vnum6 { top: 329px; }

.page {
  width: 1018px;
  margin-left: 436px;
  flex: none;
  background: #fff;
  border-left: 1px solid #c8c8c8;
  border-right: 1px solid #c8c8c8;
  display: flex;
  padding-left: 58px;
  overflow: hidden;
}

.sidebar {
  width: 223px;
  flex: none;
  background: #333;
  color: #fff;
  padding: 6px 0 0 33px;
  font-family: "DejaVu Sans Condensed", "DejaVu Sans", sans-serif;
  font-size: 14.5px;
  line-height: 16.5px;
  white-space: nowrap;
}

.logo-row {
  display: flex;
  gap: 8px;
}

.logo-name {
  font-size: 17.5px;
  line-height: 21px;
  margin-top: 2px;
}

.sidebar p {
  margin: 0;
}

.side-a {
  padding-top: 36px;
}

.side-b {
  padding-top: 32px;
}

.side-c {
  padding-top: 16px;
}

.strip {
  width: 11px;
  flex: none;
  display: flex;
  flex-direction: column;
  gap: 2px;
}

.strip-top {
  height: 32px;
  background: #b0b0b0;
}

.strip-rest {
  flex: 1;
  background: #4bacc6;
}

.page-body {
  flex: 1;
  padding: 49px 0 0 19px;
  position: relative;
}

.cursor {
  position: absolute;
  left: 528px;
  top: 0;
  width: 2px;
  height: 4px;
  background: #333;
}

.invoice-head {
  width: 634px;
  height: 44px;
  background: #333;
  color: #fff;
  display: grid;
  grid-template-columns: 76px 72px 210px 120px 88px 68px;
  align-items: center;
  text-align: center;
  font-family: "DejaVu Sans Condensed", "DejaVu Sans", sans-serif;
  font-size: 12.5px;
  font-weight: 700;
  line-height: 16px;
}
```
